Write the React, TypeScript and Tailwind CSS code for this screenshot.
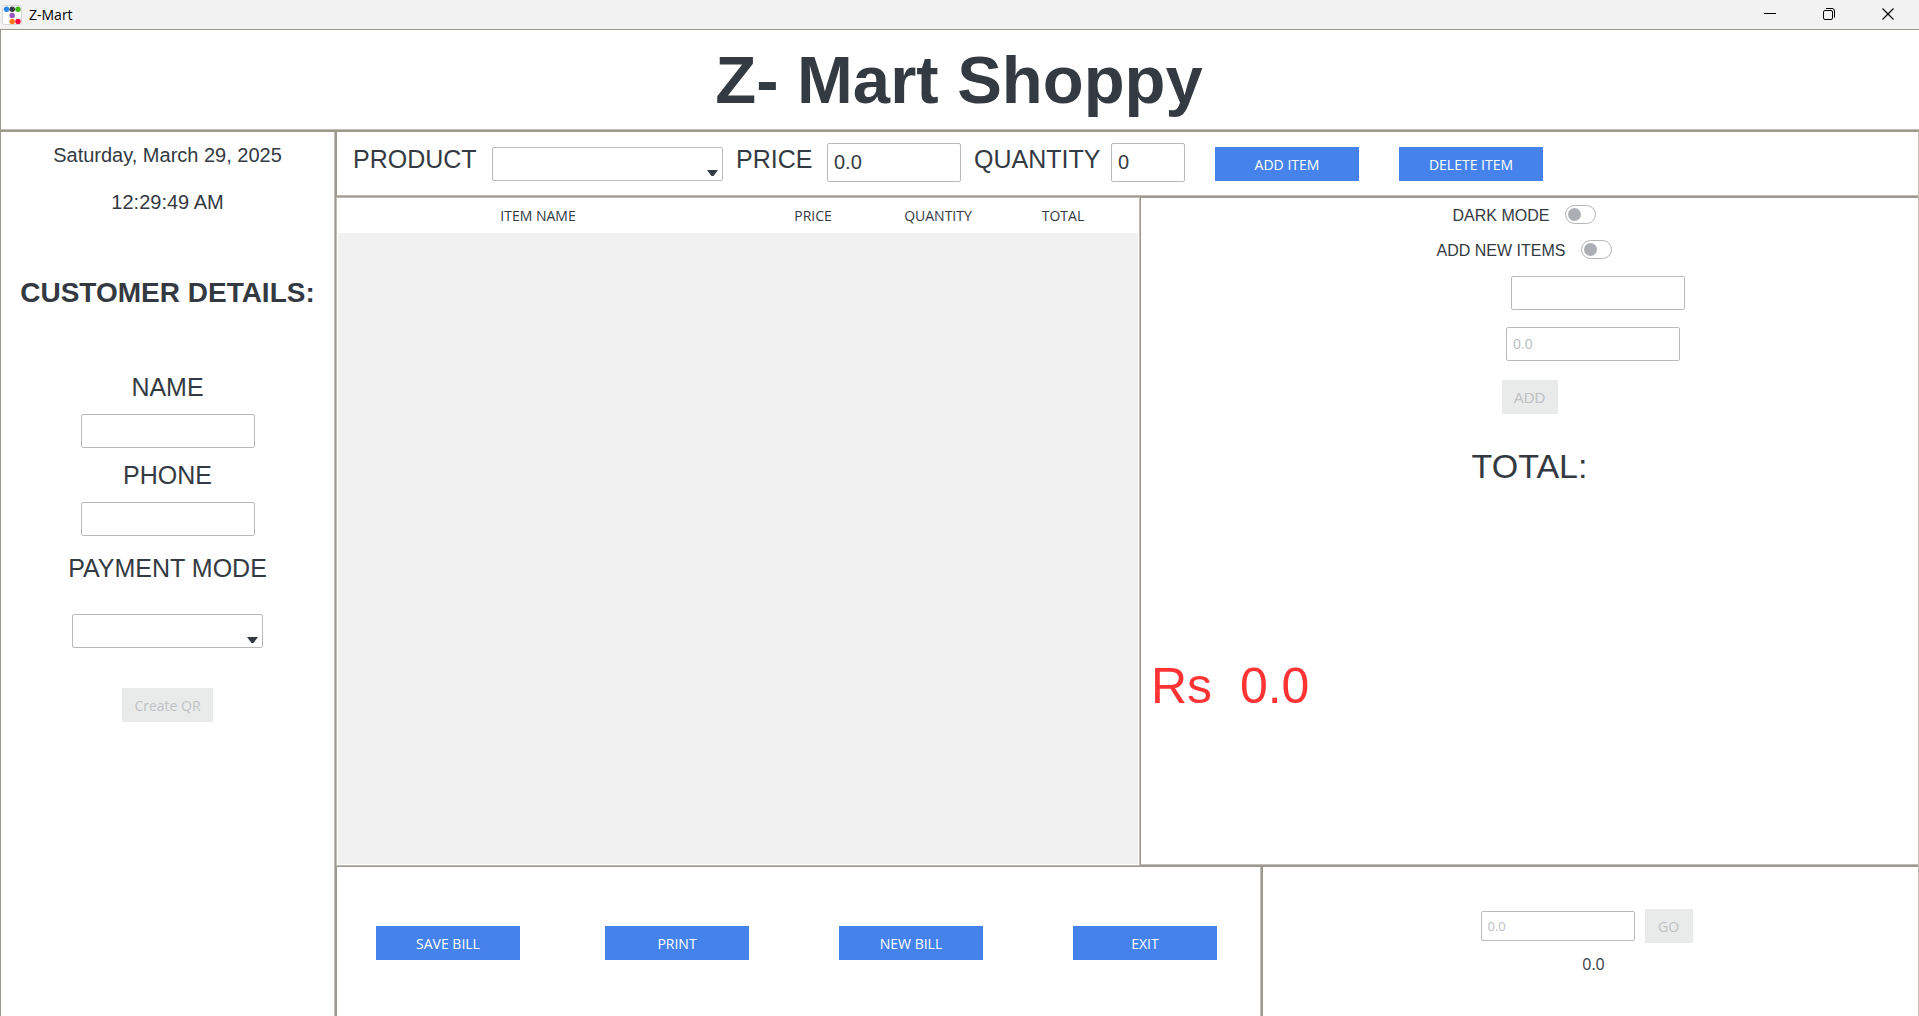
import React from "react";

const field =
  "block rounded-[2px] border border-[#bababa] bg-white outline-none text-[#343a42] disabled:text-[#bcbebf]";
const primary =
  "h-[34px] w-36 shrink-0 bg-[#4582ec] pt-px text-center font-['Open_Sans',sans-serif] text-[14px] leading-5 text-white";
const muted =
  "h-[34px] bg-[#e9ebeb] pt-px text-center leading-5 text-[#bfc1c2]";

function Dropdown({ id, className }: { id: string; className: string }) {
  return (
    <div className={"relative h-[34px] " + className}>
      <select id={id} className={field + " h-full w-full appearance-none px-2"} />
      <svg
        className="pointer-events-none absolute right-[5px] bottom-[5px]"
        width="11"
        height="6"
        viewBox="0 0 11 6"
        aria-hidden="true"
      >
        <path d="M0 0H11L6.500 6H4.500Z" fill="#343a42" />
      </svg>
    </div>
  );
}

function Toggle({ label }: { label: string }) {
  return (
    <label className="flex h-[21px] items-end justify-center gap-4 pr-2.5 text-[16px] leading-5">
      <span>{label}</span>
      <span className="relative h-[19px] w-[31px] self-start">
        <input
          type="checkbox"
          role="switch"
          className="peer block h-full w-full appearance-none rounded-full border border-[#b4b6b8] bg-white"
        />
        <span className="pointer-events-none absolute top-[3px] left-[3px] size-[13px] rounded-full bg-[#abafb3] peer-checked:left-[15px]" />
      </span>
    </label>
  );
}

function TitleBar() {
  return (
    <div className="flex h-[29px] shrink-0 items-center justify-between bg-[#f2f2f2] pr-0.5 pl-0.5">
      <div className="flex items-center gap-[7px]">
        <svg width="20" height="20" viewBox="0 0 20 20" aria-hidden="true">
          <rect x="0.5" y="0.5" width="19" height="19" rx="2" fill="#fff" stroke="#d6d6d6" />
          <circle cx="4.500" cy="4.200" r="2.700" fill="#2a86e8" />
          <circle cx="10.200" cy="4.200" r="2.700" fill="#343a42" />
          <circle cx="16" cy="4.200" r="2.700" fill="#3fb618" />
          <circle cx="10.200" cy="10.400" r="2.700" fill="#9954bb" />
          <circle cx="10.200" cy="16.400" r="2.700" fill="#ff7518" />
          <circle cx="16" cy="16.400" r="2.700" fill="#ff0039" />
        </svg>
        <span className="font-['Open_Sans',sans-serif] text-[14px] leading-5 text-black">Z-Mart</span>
      </div>
      <div className="flex h-full pb-px">
        <button aria-label="Minimize" className="flex w-[59px] items-center justify-center">
          <svg width="12" height="12" viewBox="0 0 12 12" stroke="#000" fill="none">
            <path d="M0 5.500H12" />
          </svg>
        </button>
        <button aria-label="Restore" className="flex w-[59px] items-center justify-center">
          <svg width="12" height="12" viewBox="0 0 12 12" stroke="#000" fill="none">
            <rect x="0.500" y="2.500" width="9" height="9" rx="1.500" />
            <path d="M3 .5H9A2.500 2.500 0 0 1 11.500 3V9.500" />
          </svg>
        </button>
        <button aria-label="Close" className="flex w-[59px] items-center justify-center">
          <svg width="12" height="12" viewBox="0 0 12 12" stroke="#000" strokeWidth="1.200" fill="none">
            <path d="M.5 .5L11.500 11.500M11.500 .5L.5 11.500" />
          </svg>
        </button>
      </div>
    </div>
  );
}

function Sidebar() {
  return (
    <aside className="flex w-[336px] shrink-0 flex-col items-center border-x border-t border-[#9d998f] pt-[11px] pr-px shadow-[inset_-1px_0_0_#bfbdb6]">
      <p className="text-[20px] leading-6">Saturday, March 29, 2025</p>
      <p className="mt-[23px] text-[20px] leading-6">12:29:49 AM</p>
      <h2 className="mt-[63px] text-[28px] leading-8 font-bold">CUSTOMER DETAILS:</h2>
      <label htmlFor="name" className="mt-16 text-[25px] leading-7">NAME</label>
      <input id="name" type="text" className={field + " mt-[13px] h-[34px] w-[174px] px-2"} />
      <label htmlFor="phone" className="mt-[13px] text-[25px] leading-7">PHONE</label>
      <input id="phone" type="text" className={field + " mt-[13px] h-[34px] w-[174px] px-2"} />
      <label htmlFor="payment" className="mt-[18px] text-[25px] leading-7">PAYMENT MODE</label>
      <Dropdown id="payment" className="mt-8 w-[191px]" />
      <button disabled className={muted + " mt-10 w-[91px] font-['Open_Sans',sans-serif] text-[14px]"}>
        Create QR
      </button>
    </aside>
  );
}

function ItemBar() {
  return (
    <section className="flex h-[66px] shrink-0 items-start border-y border-l border-[#9d998f] pl-4 shadow-[inset_0_-1px_0_#bfbdb6]">
      <label htmlFor="product" className="mt-[13px] w-[139px] text-[25px] leading-7">PRODUCT</label>
      <Dropdown id="product" className="mt-[15px] w-[231px]" />
      <label htmlFor="price" className="mt-[13px] ml-[13px] w-[91px] text-[25px] leading-7">PRICE</label>
      <input id="price" defaultValue="0.0" className={field + " mt-[11px] h-[39px] w-[134px] px-1.5 text-[20px]"} />
      <label htmlFor="quantity" className="mt-[13px] ml-[13px] w-[137px] text-[25px] leading-7">QUANTITY</label>
      <input id="quantity" defaultValue="0" className={field + " mt-[11px] h-[39px] w-[74px] px-1.5 text-[20px]"} />
      <button className={primary + " mt-[15px] ml-[30px]"}>ADD ITEM</button>
      <button className={primary + " mt-[15px] ml-10"}>DELETE ITEM</button>
    </section>
  );
}

function BillTable() {
  return (
    <section className="flex flex-col border border-[#bfbdb6] bg-white px-px pb-px">
      <table className="w-full table-fixed border-collapse font-['Open_Sans',sans-serif] text-[14px] leading-5">
        <thead>
          <tr className="h-[35px]">
            <th className="w-[50%] p-0 pt-px font-normal">ITEM NAME</th>
            <th className="w-[18.75%] p-0 pt-px font-normal">PRICE</th>
            <th className="w-[12.5%] p-0 pt-px font-normal">QUANTITY</th>
            <th className="w-[18.75%] p-0 pt-px font-normal">TOTAL</th>
          </tr>
        </thead>
      </table>
      <div className="flex-1 bg-[#f1f1f1]" />
    </section>
  );
}

function SummaryPanel() {
  return (
    <section className="flex flex-col border-y border-l border-[#9d998f] pt-[7px] shadow-[inset_0_-1px_0_#bfbdb6]">
      <Toggle label="DARK MODE" />
      <div className="mt-3.5">
        <Toggle label="ADD NEW ITEMS" />
      </div>
      <div className="mt-[15px] flex justify-center pl-[137px]">
        <input disabled aria-label="New item name" className={field + " h-[34px] w-[174px] px-1.5 text-[14px]"} />
      </div>
      <div className="mt-[17px] flex justify-center pl-[127px]">
        <input
          disabled
          aria-label="New item price"
          defaultValue="0.0"
          className={field + " h-[34px] w-[174px] px-1.5 text-[14px]"}
        />
      </div>
      <div className="mt-[19px] flex justify-center">
        <button disabled className={muted + " w-14 text-[15px]"}>ADD</button>
      </div>
      <p className="mt-8 text-center text-[34px] leading-10">TOTAL:</p>
      <p className="mt-[172px] pl-2.5 text-[50px] leading-[56px] whitespace-pre text-[#ff3333]">{"Rs  0.0"}</p>
    </section>
  );
}

function Footer() {
  return (
    <div className="grid h-[150px] shrink-0 grid-cols-[minmax(0,926fr)_minmax(0,656fr)]">
      <section className="flex items-start border-x border-t border-[#9d998f] pt-[59px] pl-[39px] shadow-[inset_-1px_0_0_#bfbdb6]">
        <button className={primary + " mr-[85px]"}>SAVE BILL</button>
        <div className="flex gap-[90px]">
          <button className={primary}>PRINT</button>
          <button className={primary}>NEW BILL</button>
          <button className={primary}>EXIT</button>
        </div>
      </section>
      <section className="flex flex-col items-center border-t border-l border-[#9d998f] pt-[42px] font-['Open_Sans',sans-serif]">
        <div className="flex items-center gap-2.5 pr-2">
          <input
            disabled
            aria-label="Amount"
            defaultValue="0.0"
            className={field + " h-[30px] w-[154px] px-1.5 text-[13px]"}
          />
          <button disabled className={muted + " w-12 text-[14px]"}>GO</button>
        </div>
        <output className="mt-[11px] pl-1.5 text-[16px] leading-5">0.0</output>
      </section>
    </div>
  );
}

export default function App() {
  return (
    <div className="flex h-screen flex-col bg-white font-['Liberation_Sans',Arial,sans-serif] text-[#343a42]">
      <TitleBar />
      <header className="flex h-[102px] shrink-0 items-center justify-center border-y border-l border-[#9d998f] pr-0.5 shadow-[inset_0_-1px_0_#bfbdb6]">
        <h1 className="text-[67px] leading-[76px] font-bold">Z- Mart Shoppy</h1>
      </header>
      <div className="flex min-h-0 flex-1">
        <Sidebar />
        <main className="flex min-w-0 flex-1 flex-col border-r border-[#bfbdb6]">
          <ItemBar />
          <div className="grid min-h-0 flex-1 grid-cols-[minmax(0,804fr)_minmax(0,778fr)]">
            <BillTable />
            <SummaryPanel />
          </div>
          <Footer />
        </main>
      </div>
    </div>
  );
}
